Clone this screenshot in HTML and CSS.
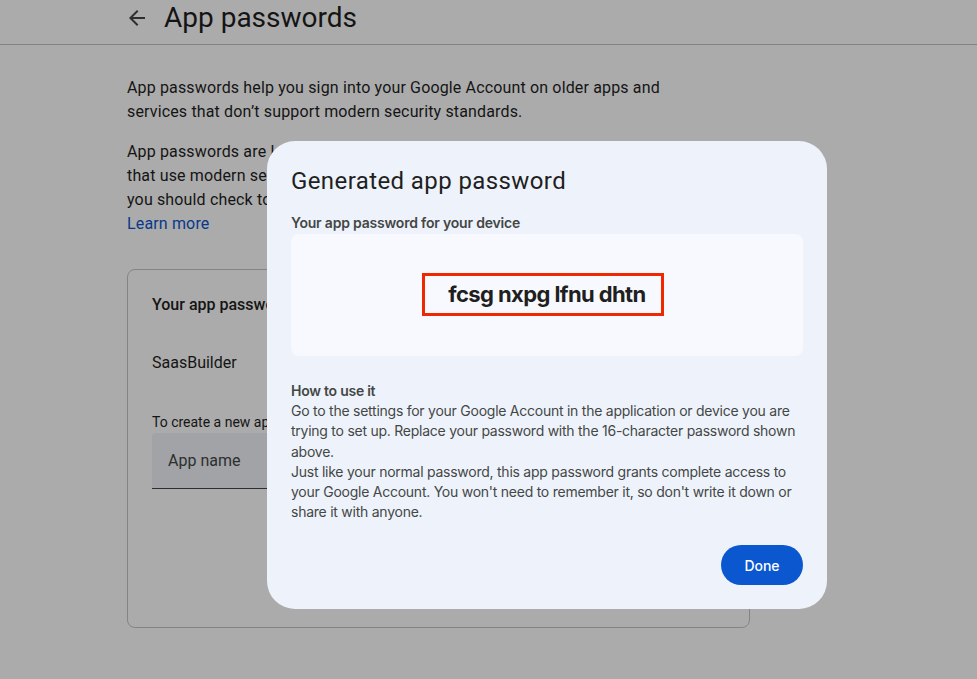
FILE: index.html
```html
<!DOCTYPE html>
<html>
<head>
<meta charset="utf-8">
<link rel="stylesheet" href="styles.css">
</head>
<body>
<div class="page">
  <header class="topbar">
    <svg class="back" width="24" height="24" viewBox="0 0 24 24"><path d="M20 11H7.83l5.59-5.59L12 4l-8 8 8 8 1.41-1.41L7.83 13H20v-2z" fill="#444746"/></svg>
    <h1 class="title">App passwords</h1>
  </header>
  <main class="content">
    <p class="para">App passwords help you sign into your Google Account on older apps and services that don’t support modern security standards.</p>
    <p class="para">App passwords are less secure than using up-to-date apps and services that use modern security standards. Before you create an app password, you should check to see if your app needs this in order to sign in.<br><a class="link">Learn more</a></p>
    <section class="card">
      <div class="card-title">Your app passwords</div>
      <div class="app-row">SaasBuilder</div>
      <div class="hint">To create a new app specific password, type a name for it below...</div>
      <div class="field"><span class="placeholder">App name</span></div>
    </section>
  </main>
</div>
<div class="scrim"></div>
<div class="dialog" role="dialog">
  <h2 class="dlg-title">Generated app password</h2>
  <div class="dlg-sub">Your app password for your device</div>
  <div class="pw-box"><div class="pw">fcsg nxpg lfnu dhtn</div></div>
  <div class="howto">
    <div class="howto-title">How to use it</div>
    <div>Go to the settings for your Google Account in the application or device you are trying to set up. Replace your password with the 16-character password shown above.</div>
    <div>Just like your normal password, this app password grants complete access to your Google Account. You won't need to remember it, so don't write it down or share it with anyone.</div>
  </div>
  <div class="actions"><button class="done">Done</button></div>
</div>
</body>
</html>
```
FILE: styles.css
```css
html, body { margin: 0; padding: 0; }
body {
  background: #fff;
  font-family: Roboto, "Open Sans", sans-serif;
  color: #1f1f1f;
  width: 977px;
  height: 679px;
  overflow: hidden;
  position: relative;
}
.topbar {
  height: 45px;
  border-bottom: 1px solid #c4c7c5;
  display: flex;
  align-items: center;
  padding-left: 125px;
  box-sizing: border-box;
  padding-bottom: 9px;
}
.back { margin-right: 15px; }
.title {
  margin: 0;
  font-weight: 400;
  font-size: 28px;
  line-height: 36px;
  color: #1f1f1f;
}
.content { padding: 31px 0 0 127px; width: 623px; }
.para {
  margin: 0 0 16px;
  font-size: 16px;
  line-height: 24px;
  color: #1f1f1f;
  width: 545px;
  letter-spacing: 0.15px;
}
.link { color: #0b57d0; }
.card {
  margin-top: 33px;
  border: 1px solid #c4c7c5;
  border-radius: 8px;
  height: 359px;
  box-sizing: border-box;
  padding: 23px 24px;
}
.card-title { font-size: 16px; font-weight: 500; line-height: 24px; }
.app-row { font-size: 16px; line-height: 24px; margin-top: 34px; }
.hint { font-size: 14px; line-height: 20px; margin-top: 37px; color: #1f1f1f; white-space: nowrap; }
.field {
  margin-top: 1px;
  height: 55px;
  background: #f0f4f9;
  border-bottom: 1px solid #444746;
  display: flex;
  align-items: center;
  padding-left: 16px;
  border-radius: 4px 4px 0 0;
  width: 380px;
}
.placeholder { font-size: 16px; color: #444746; }
.scrim {
  position: absolute;
  inset: 0;
  background: rgba(0, 0, 0, 0.33);
}
.dialog {
  position: absolute;
  left: 267px;
  top: 141px;
  width: 560px;
  height: 468px;
  box-sizing: border-box;
  background: #eef3fb;
  border-radius: 28px;
  padding: 24px 24px;
  display: flex;
  flex-direction: column;
}
.dlg-title {
  margin: 0;
  font-family: Roboto, sans-serif;
  font-weight: 400;
  font-size: 24px;
  line-height: 32px;
  color: #1f1f1f;
  letter-spacing: 0.4px;
}
.dlg-sub {
  margin-top: 16px;
  font-family: Inter, sans-serif;
  font-size: 14px;
  font-weight: 600;
  line-height: 20px;
  color: #444746;
  letter-spacing: -0.2px;
}
.pw-box {
  margin-top: 1px;
  height: 122px;
  background: #f8f9fe;
  border-radius: 8px;
  display: flex;
  justify-content: center;
  padding-top: 39px;
  box-sizing: border-box;
}
.pw {
  border: 3px solid #f02800;
  width: 242px;
  height: 43px;
  box-sizing: border-box;
  padding-left: 8px;
  text-align: center;
  font-family: Inter, sans-serif;
  font-weight: 700;
  font-size: 22px;
  line-height: 37px;
  color: #1f1f1f;
  letter-spacing: -0.6px;
  margin-right: 8px;
}
.howto {
  margin-top: 25px;
  font-family: Inter, sans-serif;
  font-size: 14px;
  line-height: 20.2px;
  color: #444746;
  letter-spacing: -0.25px;
}
.howto-title { font-weight: 600; }
.actions {
  margin-top: auto;
  display: flex;
  justify-content: flex-end;
}
.done {
  width: 82px;
  height: 40px;
  border: none;
  border-radius: 20px;
  background: #0b57d0;
  color: #fff;
  font-family: Inter, sans-serif;
  font-size: 14px;
  font-weight: 500;
}
```
